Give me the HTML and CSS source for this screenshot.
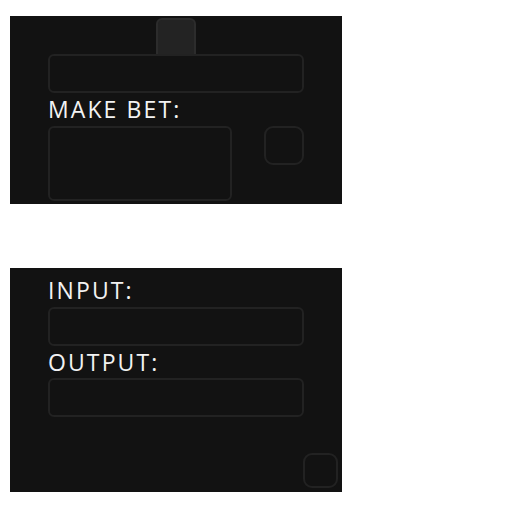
FILE: index.html
```html
<!DOCTYPE html>
<html>
<head>
<meta charset="utf-8">
<link rel="stylesheet" href="styles.css">
</head>
<body>
<div class="panel panel-bet">
  <div class="tab"></div>
  <div class="field"></div>
  <div class="label">MAKE BET:</div>
  <div class="row">
    <div class="bet-box"></div>
    <div class="square"></div>
  </div>
</div>
<div class="panel panel-io">
  <div class="label">INPUT:</div>
  <div class="field"></div>
  <div class="label">OUTPUT:</div>
  <div class="field"></div>
  <div class="square small"></div>
</div>
</body>
</html>
```
FILE: styles.css
```css
html, body {
  margin: 0;
  padding: 0;
  background: #fff;
}
body {
  padding: 16px 0 0 10px;
  font-family: "Open Sans", sans-serif;
}
.panel {
  box-sizing: border-box;
  width: 332px;
  background: #121212;
  display: flex;
  flex-direction: column;
}
.panel-bet {
  height: 188px;
  padding: 2px 38px 0 38px;
}
.panel-io {
  margin-top: 64px;
  height: 224px;
  padding: 6px 4px 4px 38px;
}
.tab {
  box-sizing: border-box;
  width: 40px;
  height: 36px;
  margin: 0 auto;
  background: #232323;
  border: 2px solid #2c2c2c;
  border-bottom: none;
  border-radius: 6px 6px 0 0;
}
.field {
  box-sizing: border-box;
  width: 256px;
  height: 39px;
  border: 2px solid #222;
  border-radius: 6px;
}
.label {
  color: #f2f2f2;
  font-size: 23px;
  line-height: 33px;
  height: 33px;
  letter-spacing: 2.1px;
}
.panel-io .label + .field + .label {
  height: 32px;
  line-height: 32px;
}
.row {
  display: flex;
  justify-content: space-between;
}
.bet-box {
  box-sizing: border-box;
  width: 184px;
  height: 75px;
  border: 2px solid #222;
  border-radius: 6px;
}
.square {
  box-sizing: border-box;
  width: 40px;
  height: 39px;
  border: 2px solid #222;
  border-radius: 9px;
}
.square.small {
  width: 35px;
  height: 35px;
  margin-top: auto;
  align-self: flex-end;
}
```
